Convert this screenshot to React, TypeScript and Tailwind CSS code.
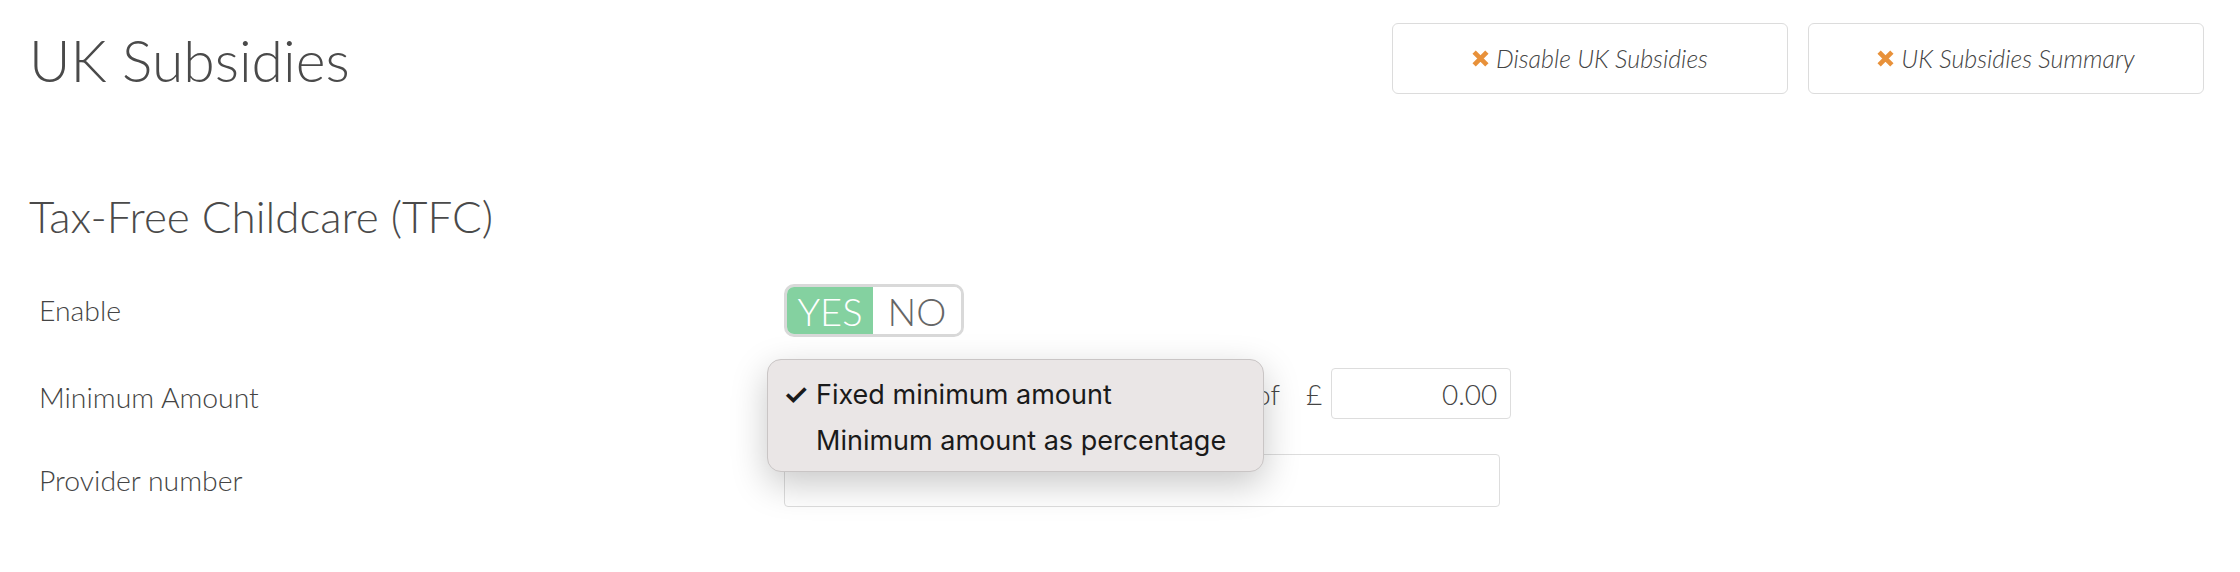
import React from "react"

function TimesIcon() {
  return (
    <svg width="17" height="17" viewBox="0 0 16 16" className="shrink-0">
      <path
        d="M2 2 L14 14 M14 2 L2 14"
        stroke="#e8913a"
        strokeWidth="4.4"
        strokeLinecap="butt"
        fill="none"
      />
    </svg>
  )
}

function HeaderButton({ label }: { label: string }) {
  return (
    <button className="flex h-[71px] w-[396px] items-center justify-center gap-[7px] rounded-[6px] border border-[#dcdcdc] bg-white text-[25px] font-light italic text-[#444]">
      <TimesIcon />
      <span>{label}</span>
    </button>
  )
}

export default function App() {
  return (
    <div className="min-h-screen bg-white font-['Lato',sans-serif] text-[#4a4a4a]">
      <div className="pl-[29px] pr-[36px] pt-[23px]">
        {/* Page header */}
        <div className="flex items-start justify-between">
          <h1 className="mt-[9px] text-[57px] font-light leading-none">
            UK Subsidies
          </h1>
          <div className="flex gap-[20px]">
            <HeaderButton label="Disable UK Subsidies" />
            <HeaderButton label="UK Subsidies Summary" />
          </div>
        </div>

        {/* Section */}
        <h2 className="mt-[100px] text-[44px] font-light leading-none">
          Tax-Free Childcare (TFC)
        </h2>

        <div className="mt-[46px] pl-[10px]">
          {/* Enable */}
          <div className="flex h-[53px] items-center">
            <span className="w-[745px] text-[28.4px] font-light leading-none text-[#444]">
              Enable
            </span>
            <div className="flex h-[53px] w-[180px] overflow-hidden rounded-[10px] border-[3px] border-[#d9d9d9] text-[38px] font-light leading-none">
              <span className="flex w-[86px] items-center justify-center bg-[#84d1a0] text-white">
                YES
              </span>
              <span className="flex flex-1 items-center justify-center bg-white text-[#666]">
                NO
              </span>
            </div>
          </div>

          {/* Minimum amount */}
          <div className="mt-[31px] flex h-[51px] items-center">
            <span className="w-[745px] pt-[8px] text-[28.4px] font-light leading-none text-[#444]">
              Minimum Amount
            </span>
            <div className="relative flex items-center">
              <div className="flex h-[51px] w-[462px] items-center rounded-[4px] border border-[#ddd] px-3 text-[24px] text-[#555]">
                Fixed minimum amount
              </div>
              <span className="ml-[9px] text-[28px] font-light leading-none text-[#444]">
                of
              </span>
              <span className="ml-[26px] text-[28px] font-light leading-none text-[#444]">
                £
              </span>
              <div className="ml-[9px] flex h-[51px] w-[180px] items-center justify-end rounded-[4px] border border-[#ddd] pr-[13px] text-[28px] font-light leading-none text-[#444]">
                0.00
              </div>

              {/* Open select menu */}
              <div className="absolute left-[-17px] top-[-9px] h-[113px] w-[497px] rounded-[14px] border border-[#c9c5c5] bg-[#eae6e6] pt-[12px] font-['Inter',sans-serif] text-[27px] leading-[46px] text-[#1a1a1a] shadow-[0_12px_36px_rgba(0,0,0,0.22)]">
                <div className="flex items-center">
                  <span className="w-[48px] pl-[15px] text-[29px] font-semibold">✓</span>
                  <span>Fixed minimum amount</span>
                </div>
                <div className="flex items-center">
                  <span className="w-[48px]" />
                  <span>Minimum amount as percentage</span>
                </div>
              </div>
            </div>
          </div>

          {/* Provider number */}
          <div className="mt-[35px] flex h-[53px] items-center">
            <span className="w-[745px] text-[28.4px] font-light leading-none text-[#444]">
              Provider number
            </span>
            <input
              type="text"
              className="h-[53px] w-[716px] rounded-[4px] border border-[#ddd] bg-white px-3 text-[24px] outline-none"
            />
          </div>
        </div>
      </div>
    </div>
  )
}
